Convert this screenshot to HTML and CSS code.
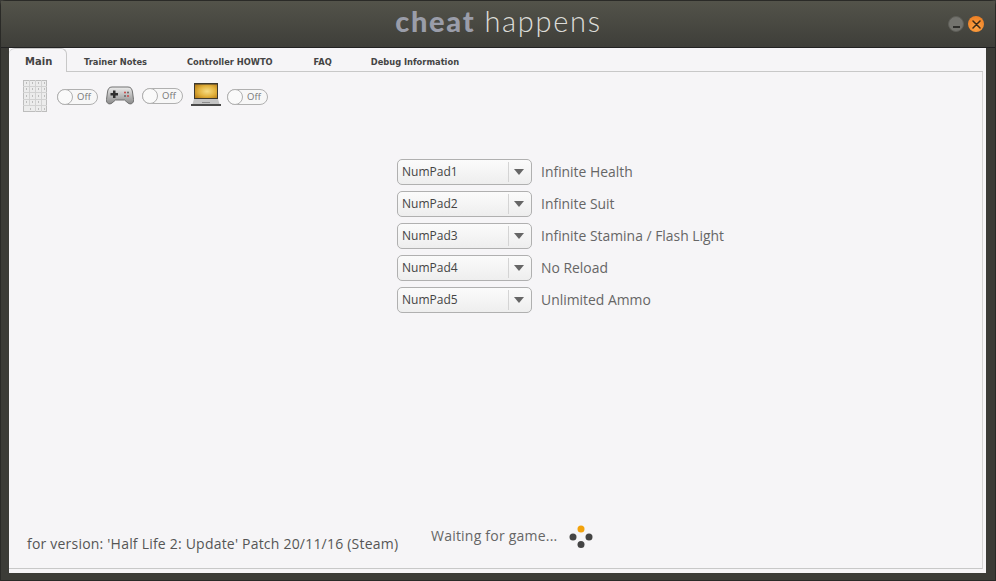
FILE: index.html
```html
<!DOCTYPE html>
<html lang="en">
<head>
<meta charset="utf-8">
<title>Cheat Happens</title>
<link rel="stylesheet" href="styles.css">
</head>
<body>
<div class="window">
  <header class="titlebar">
    <div class="logo"><b>cheat</b> <span>happens</span></div>
    <div class="controls">
      <div class="btn min"><i></i></div>
      <div class="btn close">
        <svg width="9" height="9" viewBox="0 0 9 9"><path d="M1 1l7 7M8 1L1 8" stroke="#3a2a18" stroke-width="1.5" stroke-linecap="round"/></svg>
      </div>
    </div>
  </header>
  <main class="panel">
    <nav class="tabs">
      <div class="tab active">Main</div>
      <div class="tab t1">Trainer Notes</div>
      <div class="tab t2">Controller HOWTO</div>
      <div class="tab t3">FAQ</div>
      <div class="tab t4">Debug Information</div>
    </nav>
    <section class="content">
      <div class="toolbar">
        <svg class="ic-num" width="24" height="32" viewBox="0 0 24 32">
          <rect x=".5" y=".5" width="23" height="31" fill="#ececec" stroke="#bdbdbd"/>
          <path d="M6.500 0v26M12.500 0v32M18.500 0v32M0 6.500h24M0 12.500h24M0 19.500h24M0 25.500h24" stroke="#d2d2d2" fill="none"/>
          <path d="M3 3h1M9 3h1M15 3h1M21 3h1M3 9h1M9 9h1M15 9h1M21 9h1M3 16h1M9 16h1M15 16h1M21 16h1M3 22h1M9 22h1M15 22h1M7 29h1M15 29h1M21 29h1" stroke="#8f8f8f"/>
        </svg>
        <div class="toggle first"><i></i><span>Off</span></div>
        <svg class="ic-pad" width="28" height="20" viewBox="0 0 28 20">
          <defs><linearGradient id="pg" x1="0" y1="0" x2="0" y2="1"><stop offset="0" stop-color="#ededed"/><stop offset="1" stop-color="#8a8a8a"/></linearGradient></defs>
          <path d="M6 1h16c3 0 4 2 4.500 5l1 7.500c.5 4-3 5.500-5.500 3.500L18.500 14h-9L6 17c-2.500 2-6 .5-5.500-3.500l1-7.500C2 3 3 1 6 1z" fill="url(#pg)" stroke="#707070"/>
          <path d="M7 4.500h2.500V7H12v2.500H9.500V12H7V9.500H4.500V7H7z" fill="#2e2e2e"/>
          <circle cx="19" cy="6.500" r="1" fill="#c44"/><circle cx="22" cy="6.500" r="1" fill="#666"/><circle cx="19" cy="10" r="1" fill="#666"/><circle cx="22" cy="10" r="1" fill="#c44"/>
        </svg>
        <div class="toggle second"><i></i><span>Off</span></div>
        <svg class="ic-lap" width="30" height="24" viewBox="0 0 30 24">
          <defs><radialGradient id="lg" cx=".55" cy=".5" r=".7"><stop offset="0" stop-color="#f6dd85"/><stop offset=".55" stop-color="#e2b23d"/><stop offset="1" stop-color="#b87d16"/></radialGradient></defs>
          <rect x="3" y="0" width="24" height="16" fill="#3d392e"/>
          <rect x="4" y="1.500" width="22" height="13.500" fill="url(#lg)"/>
          <path d="M3 16h24l1.500 5h-27z" fill="#c4c4c4"/>
          <rect x="11" y="19" width="8" height="1" fill="#8c8c8c"/>
          <rect x="0" y="21" width="30" height="2" fill="#4a4a4a"/>
        </svg>
        <div class="toggle third"><i></i><span>Off</span></div>
      </div>
      <div class="binds">
        <div class="bind"><div class="select"><span>NumPad1</span><em></em></div><label>Infinite Health</label></div>
        <div class="bind"><div class="select"><span>NumPad2</span><em></em></div><label>Infinite Suit</label></div>
        <div class="bind"><div class="select"><span>NumPad3</span><em></em></div><label>Infinite Stamina / Flash Light</label></div>
        <div class="bind"><div class="select"><span>NumPad4</span><em></em></div><label>No Reload</label></div>
        <div class="bind"><div class="select"><span>NumPad5</span><em></em></div><label>Unlimited Ammo</label></div>
      </div>
      <footer class="status">
        <div class="version">for version: 'Half Life 2: Update' Patch 20/11/16 (Steam)</div>
        <div class="waiting">Waiting for game...</div>
        <svg class="spinner" width="24" height="24" viewBox="0 0 24 24">
          <circle cx="12" cy="4" r="3.500" fill="#f2a20c"/>
          <circle cx="4" cy="12" r="3.500" fill="#444"/>
          <circle cx="20" cy="12" r="3.500" fill="#444"/>
          <circle cx="12" cy="19.500" r="3.500" fill="#444"/>
        </svg>
      </footer>
    </section>
  </main>
</div>
</body>
</html>
```
FILE: styles.css
```css
* { box-sizing: border-box; }
html, body { margin: 0; padding: 0; }
body { width: 996px; height: 581px; overflow: hidden; background: #3a3a36; font-family: "Open Sans", "Liberation Sans", sans-serif; }
.window {
  width: 996px; height: 581px; display: flex; flex-direction: column;
  background: #3c3c37; border: 1px solid #2a2a27; border-radius: 6px 6px 0 0;
  padding: 0 9px 7px 8px;
}
.titlebar {
  height: 47px; flex: none; margin: 0 -9px 0 -8px; position: relative;
  background: linear-gradient(#53534a, #3e3e39);
  display: flex; justify-content: center; border-bottom: 1px solid #222;
}
.logo { margin: 2px 0 0 1px; font-family: Lato, sans-serif; font-size: 29px; letter-spacing: 1.7px; line-height: 36px; }
.logo b { font-weight: 900; color: #9a9da9; }
.logo span { font-weight: 300; color: #dcdcd8; }
.controls { position: absolute; right: 11px; top: 15px; display: flex; gap: 4px; }
.btn { width: 16px; height: 16px; border-radius: 50%; display: flex; align-items: center; justify-content: center; }
.min { background: #73736e; border: 1px solid #5e5e58; }
.min i { width: 7px; height: 2px; background: #2e2e2b; margin-top: 5px; }
.close { background: radial-gradient(circle at 50% 70%, #ffa445, #e8761c); }
.panel { flex: 1; background: #f6f5f7; display: flex; flex-direction: column; padding-bottom: 4px; min-height: 0; }
.tabs { display: flex; height: 24px; flex: none; font-family: "DejaVu Sans", sans-serif; font-weight: 700; font-size: 8.300px; color: #444; }
.tab { line-height: 28px; border-bottom: 1px solid #c8c8c8; white-space: nowrap; }
.tab.active { width: 58px; padding-left: 16px; font-size: 10px; border: 1px solid #c8c8c8; border-bottom: 0; border-left: 0; border-radius: 6px 6px 0 0; line-height: 26px; }
.t1 { padding: 0 40px 0 17px; }
.t2 { padding-right: 41px; }
.t3 { padding-right: 39px; }
.t4 { flex: 1; margin-right: 3px; }
.content { flex: 1; position: relative; display: flex; flex-direction: column; border-right: 1px solid #d6d6d6; border-bottom: 1px solid #c8c8c8; margin-right: 3px; min-height: 0; }
.toolbar { display: flex; align-items: flex-start; height: 87px; padding: 8px 0 0 14px; flex: none; }
.toggle { width: 41px; height: 16px; border: 1px solid #b0b0b0; border-radius: 8px; position: relative; background: #f7f7f7; font-size: 9.500px; color: #777; line-height: 14px; }
.toggle i { position: absolute; left: -1px; top: -1px; width: 16px; height: 16px; border-radius: 50%; border: 1px solid #b0b0b0; background: #fafafa; }
.toggle span { position: absolute; left: 19px; top: 0; }
.toggle.first { margin: 9px 8px 0 10px; }
.toggle.second { margin: 8px 8px 0 8px; }
.toggle.third { margin: 9px 0 0 6px; }
.ic-pad { margin-top: 6px; }
.ic-lap { margin-top: 3px; }
.binds { display: flex; flex-direction: column; gap: 6px; padding-left: 388px; flex: none; }
.bind { display: flex; align-items: center; height: 26px; }
.select { width: 135px; height: 26px; border: 1px solid #b0b0b0; border-radius: 5px; background: linear-gradient(#fbfbfb, #eeeeee); display: flex; align-items: center; font-size: 12px; color: #444; padding-left: 4px; }
.select span { flex: 1; margin-top: -2px; }
.select em { width: 23px; height: 20px; border-left: 1px solid #d4d4d4; position: relative; }
.select em::after { content: ""; position: absolute; left: 5px; top: 7px; border: 5.500px solid transparent; border-top: 6px solid #666; border-bottom: 0; }
.bind label { margin: -2px 0 0 9px; font-size: 13.900px; color: #666; white-space: nowrap; }
.status { margin-top: auto; height: 46px; display: flex; align-items: flex-start; padding: 8px 0 0 18px; flex: none; }
.version { font-size: 14px; letter-spacing: .21px; color: #555; padding-top: 4px; width: 404px; white-space: nowrap; }
.waiting { font-size: 14px; letter-spacing: .22px; color: #666; margin-top: -4px; width: 138px; white-space: nowrap; }
.spinner { margin-top: -5px; }
```
